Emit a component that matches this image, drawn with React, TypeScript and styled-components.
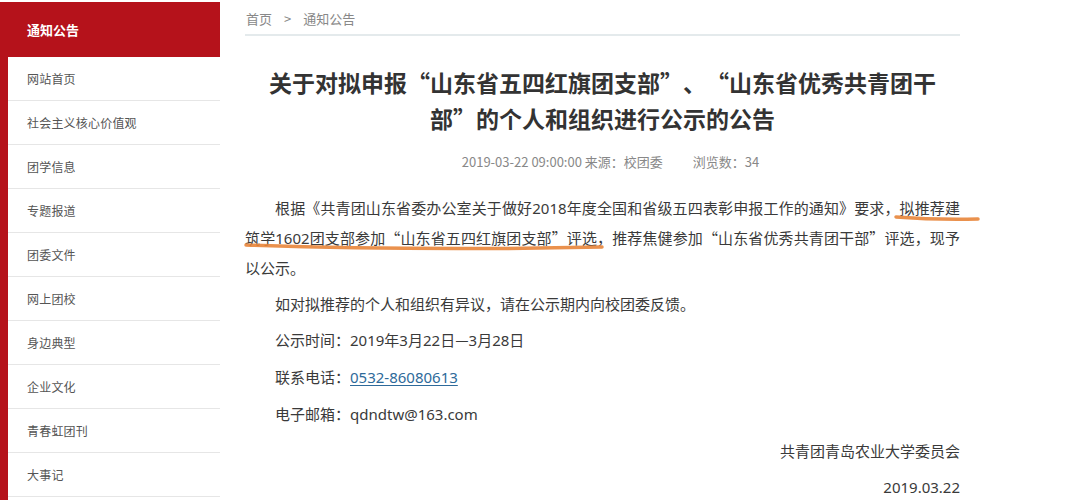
import React from "react";
import styled, { createGlobalStyle } from "styled-components";

/* Global */
const GlobalStyle = createGlobalStyle`
	html, body {
		margin: 0;
		padding: 0;
		background: #ffffff;
	}
	body {
		font-family: "Noto Sans CJK SC", "Noto Sans", sans-serif;
		color: #333333;
	}
`;

const colors = {
	red: "#b5121b",
	menuText: "#555555",
	rowBorder: "#e6e6e6",
	title: "#333333",
	body: "#3a3a3a",
	muted: "#888888",
	link: "#2e6a9a",
	marker: "#e8853a",
};

/* Layout */
const Page = styled.div`
	position: relative;
	display: flex;
	width: 1080px;
	height: 500px;
	overflow: hidden;
`;

const Sidebar = styled.aside`
	display: flex;
	flex-direction: column;
	width: 220px;
	padding-top: 2px;
`;

const SideHeader = styled.div`
	display: flex;
	align-items: center;
	height: 55px;
	padding-left: 27px;
	background: ${colors.red};
	color: #ffffff;
	font-size: 13px;
	font-weight: 700;
`;

const SideMenu = styled.ul`
	flex: 1;
	margin: 0;
	padding: 0;
	list-style: none;
	border-left: 8px solid ${colors.red};
`;

const SideItem = styled.li`
	display: flex;
	align-items: center;
	height: 43px;
	padding-left: 19px;
	border-bottom: 1px solid ${colors.rowBorder};
	color: ${colors.menuText};
	font-size: 12px;
	letter-spacing: 0.2px;
`;

const Main = styled.main`
	width: 715px;
	margin-left: 25px;
`;

const Breadcrumb = styled.div`
	display: flex;
	align-items: center;
	gap: 12px;
	box-sizing: border-box;
	height: 36px;
	padding: 2px 0 0 1px;
	border-bottom: 2px solid #e4eaec;
	color: ${colors.muted};
	font-size: 13px;
`;

const Title = styled.h1`
	margin: 28px 0 0;
	text-align: center;
	font-size: 23px;
	line-height: 36px;
	font-weight: 700;
	color: ${colors.title};
	text-spacing-trim: space-all;
`;

const Meta = styled.div`
	display: flex;
	justify-content: center;
	gap: 30px;
	margin: 16px 0 21px;
	padding-left: 16px;
	line-height: 20px;
	font-size: 13px;
	color: ${colors.muted};
`;

const Paragraph = styled.p<{ align?: "left" | "right" }>`
	margin: 0 0 7px;
	font-size: 15px;
	line-height: 29px;
	color: ${colors.body};
	text-align: ${({ align }) => (align === "right" ? "right" : "justify")};
	text-indent: ${({ align }) => (align === "right" ? "0" : "2em")};
`;

const Latin = styled.span`
	font-family: "Noto Sans", "Noto Sans CJK SC", sans-serif;
`;

const PhoneLink = styled.a`
	font-family: "Noto Sans", "Noto Sans CJK SC", sans-serif;
	color: ${colors.link};
	text-decoration: underline;
	text-underline-offset: 2px;
`;

const Marker = styled.svg`
	position: absolute;
	left: 0;
	top: 0;
	pointer-events: none;
`;

const menuItems = ["网站首页", "社会主义核心价值观", "团学信息", "专题报道", "团委文件", "网上团校", "身边典型", "企业文化", "青春虹团刊", "大事记"];

export default function App() {
	return (
		<React.Fragment>
			<GlobalStyle />
			<Page>
				<Sidebar>
					<SideHeader>通知公告</SideHeader>
					<SideMenu>
						{menuItems.map((item: string) => (
							<SideItem key={item}>{item}</SideItem>
						))}
					</SideMenu>
				</Sidebar>

				<Main>
					<Breadcrumb>
						<span>首页</span>
						<span>&gt;</span>
						<span>通知公告</span>
					</Breadcrumb>

					<Title>
						关于对拟申报“山东省五四红旗团支部”、“山东省优秀共青团干
						<br />
						部”的个人和组织进行公示的公告
					</Title>

					<Meta>
						<span>2019-03-22 09:00:00 来源：校团委</span>
						<span>浏览数：34</span>
					</Meta>

					<Paragraph>
						根据《共青团山东省委办公室关于做好<Latin>2018</Latin>年度全国和省级五四表彰申报工作的通知》要求，拟推荐建筑学<Latin>1602</Latin>
						团支部参加“山东省五四红旗团支部”评选，推荐焦健参加“山东省优秀共青团干部”评选，现予以公示。
					</Paragraph>
					<Paragraph>如对拟推荐的个人和组织有异议，请在公示期内向校团委反馈。</Paragraph>
					<Paragraph>
						公示时间：<Latin>2019</Latin>年<Latin>3</Latin>月<Latin>22</Latin>日—<Latin>3</Latin>月<Latin>28</Latin>日
					</Paragraph>
					<Paragraph>
						联系电话：<PhoneLink href="#">0532-86080613</PhoneLink>
					</Paragraph>
					<Paragraph>
						电子邮箱：<Latin>qdndtw@163.com</Latin>
					</Paragraph>
					<Paragraph align="right">共青团青岛农业大学委员会</Paragraph>
					<Paragraph align="right">
						<Latin>2019.03.22</Latin>
					</Paragraph>
				</Main>

				{/* hand-drawn highlight strokes */}
				<Marker width="1080" height="500" viewBox="0 0 1080 500">
					<path d="M896 217 Q 935 220 978 219" stroke={colors.marker} strokeWidth="3.5" strokeLinecap="round" fill="none" opacity="0.9" />
					<path d="M246 245 Q 420 251 602 247" stroke={colors.marker} strokeWidth="3.5" strokeLinecap="round" fill="none" opacity="0.9" />
				</Marker>
			</Page>
		</React.Fragment>
	);
}
